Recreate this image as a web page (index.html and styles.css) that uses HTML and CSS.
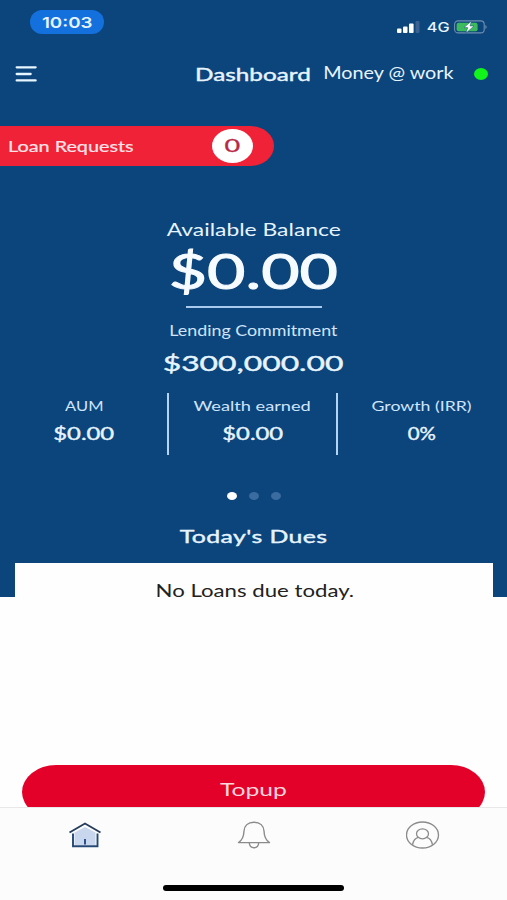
FILE: index.html
```html
<!DOCTYPE html>
<html lang="en">
<head>
<meta charset="utf-8">
<title>Dashboard</title>
<link rel="stylesheet" href="styles.css">
</head>
<body>
<div class="app">
  <main class="hero">
    <div class="status">
      <div class="clock"><span class="t clock-text">10:03</span></div>
      <div class="signals">
        <svg class="bars" width="24" height="12" viewBox="0 0 24 12">
          <rect x="1" y="7.5" width="4.5" height="4.5" rx="1" fill="#fff"/>
          <rect x="7" y="5.5" width="4.5" height="6.5" rx="1" fill="#fff"/>
          <rect x="13" y="2.5" width="4.600" height="9.5" rx="1" fill="#fff"/>
          <rect x="19.500" y="0" width="4" height="12" rx="1" fill="#3a6190"/>
        </svg>
        <span class="t network">4G</span>
        <svg class="battery" width="34" height="14" viewBox="0 0 34 14">
          <rect x=".6" y=".9" width="29.6" height="12" rx="3.5" fill="none" stroke="#6f8fb0" stroke-width="1.1"/>
          <rect x="2.6" y="2.7" width="21" height="8.5" rx="2" fill="#3dbb5c"/>
          <path d="M31.4 5v4c1.600-.5 1.600-3.500 0-4z" fill="#6f8fb0"/>
          <path d="M17.500 1 10 7.600h3.800L12 13l8-7h-4z" fill="#fff" stroke="#14527a" stroke-width=".5"/>
        </svg>
      </div>
    </div>
    <header class="header">
      <svg class="menu" width="22" height="18" viewBox="0 0 22 18" stroke="#e8f6ff" stroke-width="2.300" stroke-linecap="round">
        <path d="M1.700 2.300h19M1.700 9h14M1.700 15.500h19"/>
      </svg>
      <h1 class="title"><span class="t title-text">Dashboard</span></h1>
      <div class="work"><span class="t work-text">Money @ work</span></div>
      <i class="online"></i>
    </header>
    <div class="requests">
      <span class="t requests-text">Loan Requests</span>
      <span class="count"><span class="t count-text">0</span></span>
    </div>
    <section class="balance">
      <div class="row-label"><span class="t balance-label">Available Balance</span></div>
      <div class="row-amount"><span class="t balance-amount">$0.00</span></div>
      <hr class="rule">
      <div class="row-lending"><span class="t lending-label">Lending Commitment</span></div>
      <div class="row-commit"><span class="t lending-amount">$300,000.00</span></div>
    </section>
    <section class="stats">
      <div class="stat"><div class="stat-label"><span class="t aum">AUM</span></div><div class="stat-value"><span class="t money">$0.00</span></div></div>
      <div class="stat"><div class="stat-label"><span class="t wealth">Wealth earned</span></div><div class="stat-value"><span class="t money">$0.00</span></div></div>
      <div class="stat"><div class="stat-label"><span class="t growth">Growth (IRR)</span></div><div class="stat-value"><span class="t percent">0%</span></div></div>
    </section>
    <div class="dots"><i class="dot active"></i><i class="dot"></i><i class="dot"></i></div>
    <h2 class="dues"><span class="t dues-text">Today's Dues</span></h2>
    <div class="card"><span class="t card-text">No Loans due today.</span></div>
  </main>
  <div class="action"><button class="topup"><span class="t topup-text">Topup</span></button></div>
  <nav class="tabs">
    <div class="tab">
      <svg width="34" height="28" viewBox="0 0 34 28" fill="none">
        <path d="M6.500 11.500 17 6l10.500 5.500V24h-21z" fill="#c8d7ee"/>
        <path d="M1.500 11.500 17 2.500l15.500 9" stroke="#253d5c" stroke-width="1.900"/>
        <path d="M5 12.500v12.700h24.500V12.500" stroke="#244775" stroke-width="1.900"/>
        <path d="M17 18v5.500" stroke="#2d5288" stroke-width="2"/>
      </svg>
    </div>
    <div class="tab">
      <svg width="34" height="28" viewBox="0 0 34 28" fill="none" stroke="#8b8b8b" stroke-width="1.400" stroke-linejoin="round">
        <path d="M17 1.200C23.300 1.200 26.700 5 27 10C27.200 15.500 28.500 19 32.500 21.600H1.500C5.500 19 6.800 15.500 7 10C7.300 5 10.700 1.200 17 1.200Z"/>
        <path d="M12.300 21.800c.4 6.600 9 6.600 9.400 0"/>
      </svg>
    </div>
    <div class="tab">
      <svg width="34" height="28" viewBox="0 0 34 28" fill="none" stroke="#8b8b8b" stroke-width="1.300">
        <ellipse cx="16.500" cy="14" rx="16" ry="13"/>
        <ellipse cx="16.500" cy="12.800" rx="6" ry="5"/>
        <path d="M6.500 23.800c.7-4.200 2.800-6.800 6-7.500M26.500 23.800c-.7-4.200-2.800-6.800-6-7.500"/>
      </svg>
    </div>
    <i class="home-bar"></i>
  </nav>
</div>
</body>
</html>
```
FILE: styles.css
```css
* { box-sizing: border-box; }
body { margin: 0; background: #fefefe; font-family: Lato, "Open Sans", sans-serif; color: #e6f4ff; }
.app { width: 507px; height: 900px; overflow: hidden; display: flex; flex-direction: column; }
.t { display: inline-block; white-space: nowrap; transform: scaleX(1.25); }
.hero { height: 597px; background: #0c447c; display: flex; flex-direction: column; flex-shrink: 0; }

.status { height: 48px; flex-shrink: 0; display: flex; justify-content: space-between; padding: 10px 19px 0 30px; }
.clock { width: 74px; height: 24px; border-radius: 12px; background: #1470dc; text-align: center; line-height: 24px; }
.clock-text { font: 600 15px/24px Inter, sans-serif; transform: scaleX(1.25); }
.signals { display: flex; height: 34px; align-items: center; }
.network { font: 500 13px/20px Inter, sans-serif; margin: 0 7px 0 9px; }

.header { height: 52px; flex-shrink: 0; display: flex; align-items: center; padding: 0 19px 0 15px; }
.menu { margin-right: 159px; }
.title { margin: 0; width: 115px; display: flex; justify-content: center; font-size: 18px; line-height: 24px; font-weight: 400; }
.title-text { transform: scaleX(1.35); -webkit-text-stroke: .4px; }
.work { width: 130px; margin: -3px 21px 0 13px; display: flex; justify-content: center; font-size: 16.5px; line-height: 24px; }
.work-text { transform: scaleX(1.2); }
.online { width: 14px; height: 12px; border-radius: 50%; background: #12f51b; }

.requests { width: 274px; height: 40px; margin-top: 26px; flex-shrink: 0; padding: 0 21px 0 8px; border-radius: 0 24px 24px 0 / 0 20px 20px 0; background: #ef2237; display: flex; align-items: center; justify-content: space-between; }
.requests-text { font-size: 15px; transform: scaleX(1.32); transform-origin: left; color: #ffe2e9; -webkit-text-stroke: .2px; }
.count { width: 41px; height: 34px; border-radius: 50%; background: #fff; text-align: center; line-height: 33px; }
.count-text { color: #b92845; font-size: 18px; transform: scaleX(1.5); -webkit-text-stroke: .3px; }

.balance { margin-top: 52px; text-align: center; flex-shrink: 0; }
.row-label { height: 24px; font-size: 17px; line-height: 24px; }
.balance-label { transform: scaleX(1.345); }
.row-amount { height: 64px; font-size: 48px; line-height: 58px; color: #f6fbff; }
.balance-amount { transform: scaleX(1.38); -webkit-text-stroke: 1px; }
.rule { width: 136px; height: 2px; margin: 0 auto; border: 0; background: #a9caef; }
.row-lending { margin-top: 12px; height: 22px; font-size: 14.5px; line-height: 22px; color: #cfe5fb; }
.lending-label { transform: scaleX(1.23); }
.row-commit { margin-top: 6px; height: 30px; font-size: 21.5px; line-height: 30px; }
.lending-amount { transform: scaleX(1.48); -webkit-text-stroke: .4px; }

.stats { margin-top: 15px; height: 62px; flex-shrink: 0; display: grid; grid-template-columns: 167px 169px 169px; text-align: center; }
.stat:first-child { padding-left: 1px; }
.stat + .stat { border-left: 2px solid #b5d4f3; }
.stat-label { padding-top: 3px; font-size: 14px; line-height: 20px; color: #cfe5fb; }
.stat-value { padding-top: 6px; font-size: 17px; line-height: 23px; }
.stat-value .t { -webkit-text-stroke: .4px; }
.aum { transform: scaleX(1.18); }
.wealth { transform: scaleX(1.3); }
.growth { transform: scaleX(1.265); }
.money { transform: scaleX(1.4); }
.percent { transform: scaleX(1.2); }

.dots { margin-top: 37px; height: 8px; flex-shrink: 0; display: flex; justify-content: center; gap: 12px; }
.dot { width: 10px; height: 8px; border-radius: 50%; background: #3a6c9f; }
.dot.active { background: #fff; }
.dues { margin: 24px 0 0; height: 26px; flex-shrink: 0; text-align: center; font-size: 18px; line-height: 25px; font-weight: 400; }
.dues-text { letter-spacing: .3px; transform: scaleX(1.38); -webkit-text-stroke: .4px; }
.card { margin: 13px 14px 0 15px; height: 60px; flex-shrink: 0; background: #fefefe; text-align: center; color: #222; font-size: 16.5px; line-height: 56px; }
.card-text { transform: translateX(1px) scaleX(1.345); }

.action { height: 210px; padding: 168px 22px 0; overflow: hidden; flex-shrink: 0; }
.topup { display: block; width: 463px; height: 54px; padding: 0 0 5px; border: 0; border-radius: 34px / 27px; background: #e40129; color: #ffd7dd; font: 18px/49px Lato, sans-serif; text-align: center; }
.topup-text { transform: scaleX(1.37); }
.tabs { position: relative; height: 93px; border-top: 1px solid #e8e8e8; background: #fcfcfc; display: grid; grid-template-columns: repeat(3, 169px); }
.tab { padding-top: 13px; text-align: center; }
.home-bar { position: absolute; left: 163px; bottom: 9px; width: 181px; height: 6px; border-radius: 3px; background: #000; }
```
